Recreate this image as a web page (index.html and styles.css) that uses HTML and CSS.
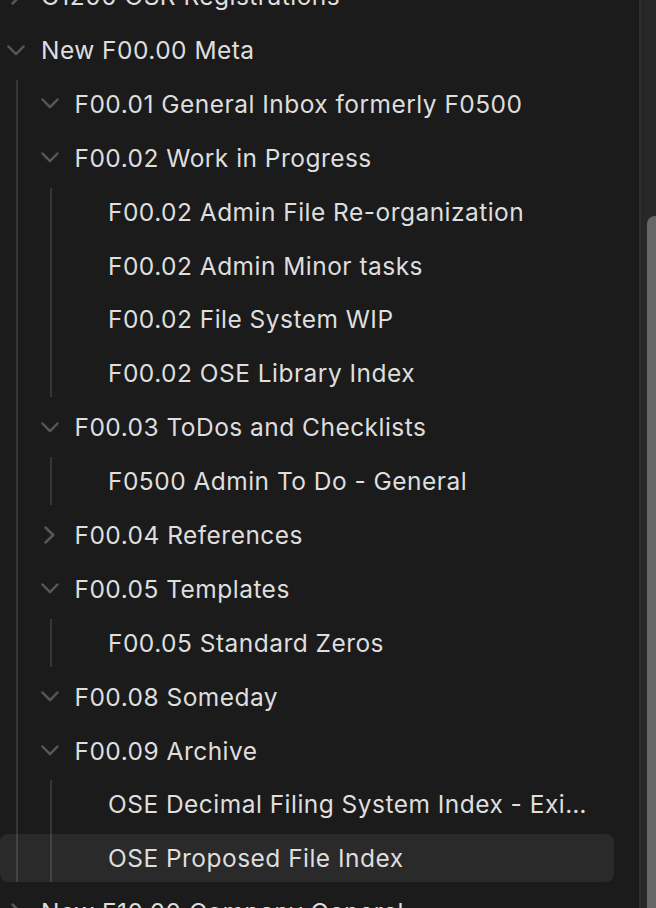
FILE: index.html
```html
<!DOCTYPE html>
<html lang="en">
<head>
  <meta charset="UTF-8">
  <title>Files</title>
  <link rel="stylesheet" href="styles.css">
</head>
<body>
  <div class="pane">
    <div class="tree-scroll">
      <div class="tree">
        <div class="row l0"><span class="caret"><svg class="right" viewBox="0 0 11 18"><path d="M1.5 1.5 9.2 9 1.5 16.5"/></svg></span><span class="name">C1200 OSR Registrations</span></div>
        <div class="item">
          <div class="row l0"><span class="caret"><svg class="down" viewBox="0 0 18 11"><path d="M1.5 1.5 9 9.2 16.5 1.5"/></svg></span><span class="name">New F00.00 Meta</span></div>
          <div class="children g1">
            <div class="row l1"><span class="caret"><svg class="down" viewBox="0 0 18 11"><path d="M1.5 1.5 9 9.2 16.5 1.5"/></svg></span><span class="name">F00.01 General Inbox formerly F0500</span></div>
            <div class="item">
              <div class="row l1"><span class="caret"><svg class="down" viewBox="0 0 18 11"><path d="M1.5 1.5 9 9.2 16.5 1.5"/></svg></span><span class="name">F00.02 Work in Progress</span></div>
              <div class="children g2">
                <div class="row l2"><span class="name">F00.02 Admin File Re-organization</span></div>
                <div class="row l2"><span class="name">F00.02 Admin Minor tasks</span></div>
                <div class="row l2"><span class="name">F00.02 File System WIP</span></div>
                <div class="row l2"><span class="name">F00.02 OSE Library Index</span></div>
              </div>
            </div>
            <div class="item">
              <div class="row l1"><span class="caret"><svg class="down" viewBox="0 0 18 11"><path d="M1.5 1.5 9 9.2 16.5 1.5"/></svg></span><span class="name">F00.03 ToDos and Checklists</span></div>
              <div class="children g2">
                <div class="row l2"><span class="name">F0500 Admin To Do - General</span></div>
              </div>
            </div>
            <div class="row l1"><span class="caret"><svg class="right" viewBox="0 0 11 18"><path d="M1.5 1.5 9.2 9 1.5 16.5"/></svg></span><span class="name">F00.04 References</span></div>
            <div class="item">
              <div class="row l1"><span class="caret"><svg class="down" viewBox="0 0 18 11"><path d="M1.5 1.5 9 9.2 16.5 1.5"/></svg></span><span class="name">F00.05 Templates</span></div>
              <div class="children g2">
                <div class="row l2"><span class="name">F00.05 Standard Zeros</span></div>
              </div>
            </div>
            <div class="row l1"><span class="caret"><svg class="down" viewBox="0 0 18 11"><path d="M1.5 1.5 9 9.2 16.5 1.5"/></svg></span><span class="name">F00.08 Someday</span></div>
            <div class="item">
              <div class="row l1"><span class="caret"><svg class="down" viewBox="0 0 18 11"><path d="M1.5 1.5 9 9.2 16.5 1.5"/></svg></span><span class="name">F00.09 Archive</span></div>
              <div class="children g2">
                <div class="row l2"><span class="name">OSE Decimal Filing System Index - Existing</span></div>
                <div class="row l2 active"><span class="name">OSE Proposed File Index</span></div>
              </div>
            </div>
          </div>
        </div>
        <div class="row l0"><span class="caret"><svg class="right" viewBox="0 0 11 18"><path d="M1.5 1.5 9.2 9 1.5 16.5"/></svg></span><span class="name">New F10.00 Company General</span></div>
      </div>
    </div>
    <div class="scrollbar">
      <div class="thumb"></div>
    </div>
  </div>
</body>
</html>
```

FILE: styles.css
```css
html, body {
  margin: 0;
  height: 100%;
  background: #1b1b1b;
}
body {
  font-family: Inter, 'Liberation Sans', sans-serif;
  color: #dedede;
  overflow: hidden;
}
.pane {
  display: flex;
  height: 908px;
}
.tree-scroll {
  flex: 1;
  overflow: hidden;
  border-right: 2px solid #2f2f2f;
}
.tree {
  width: 614px;
  margin-top: -27.9px;
  display: flex;
  flex-direction: column;
  gap: 5.9px;
}
.item,
.children {
  display: flex;
  flex-direction: column;
  gap: 5.9px;
}
.children.g1 {
  background: linear-gradient(#363636, #363636) no-repeat 16px 0 / 2px 100%;
}
.children.g2 {
  background: linear-gradient(#363636, #363636) no-repeat 50px 0 / 2px 100%;
}
.row {
  height: 48px;
  display: flex;
  align-items: center;
  border-radius: 8px;
  padding-right: 20px;
  font-size: 24.5px;
  letter-spacing: 0.47px;
  white-space: nowrap;
  min-width: 0;
}
.row.l0 { padding-left: 7px; }
.row.l1 { padding-left: 40.5px; }
.row.l2 { padding-left: 108px; }
.row.active {
  background: rgba(255, 255, 255, 0.065);
}
.caret {
  width: 18px;
  height: 18px;
  margin-right: 16px;
  flex: none;
  display: flex;
  align-items: center;
  justify-content: center;
}
.caret svg {
  fill: none;
  stroke: #575757;
  stroke-width: 2.5;
  stroke-linecap: round;
  stroke-linejoin: round;
}
.caret svg.down { width: 18px; height: 11px; }
.caret svg.right { width: 11px; height: 18px; }
.name {
  overflow: hidden;
  text-overflow: ellipsis;
}
.scrollbar {
  width: 15px;
  background: #272727;
  display: flex;
  flex-direction: column;
  align-items: flex-end;
}
.thumb {
  margin-top: 216px;
  width: 9px;
  flex: 1;
  background: #666;
  border-top-left-radius: 8px;
}
```
